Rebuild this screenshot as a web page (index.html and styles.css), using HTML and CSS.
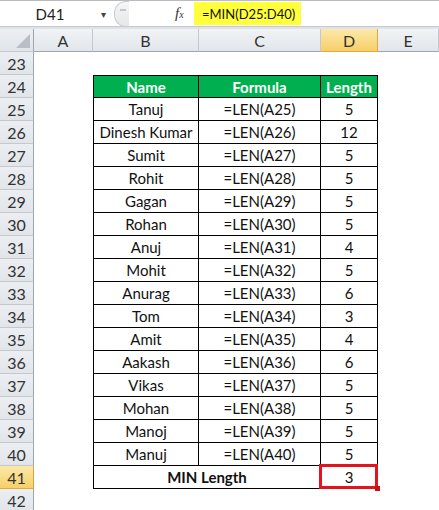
FILE: index.html
```html
<!DOCTYPE html>
<html lang="en">
<head>
<meta charset="UTF-8">
<title>MIN Length</title>
<link rel="stylesheet" href="styles.css">
</head>
<body>
<div class="sheet">
    <div class="formula-bar">
        <div class="name-box">D41</div>
        <div class="name-arrow">&#9662;</div>
        <div class="bar-knob"><span></span></div>
        <div class="fx">f<small>x</small></div>
        <div class="formula"><span>=MIN(D25:D40)</span></div>
    </div>
    <div class="gap"></div>
    <div class="row col-heads">
        <div class="corner"><svg width="14" height="14" viewBox="0 0 14 14"><polygon points="14,0 14,14 0,14" fill="#b9bec6"/></svg></div>
        <div class="ch c-a">A</div>
        <div class="ch c-b">B</div>
        <div class="ch c-c">C</div>
        <div class="ch c-d active">D</div>
        <div class="ch c-e">E</div>
    </div>
    <div id="rows"></div>
</div>
<script src="app.js"></script>
</body>
</html>
```

FILE: styles.css
```css
body {
    margin: 0;
    background: #ffffff;
    font-family: Lato, 'Open Sans', Arial, sans-serif;
}
.sheet {
    width: 439px;
    height: 510px;
    overflow: hidden;
}
.formula-bar {
    height: 27px;
    box-sizing: border-box;
    border-top: 1px solid #b8bcc2;
    border-bottom: 1px solid #c6cad0;
    display: flex;
    align-items: center;
    background: #ffffff;
}
.name-box {
    width: 92px;
    text-align: center;
    font-size: 15px;
    color: #222;
    padding-left: 4px;
}
.name-arrow {
    width: 14px;
    font-size: 10px;
    color: #444;
    text-align: center;
}
.bar-knob {
    width: 14px;
    height: 24px;
    margin-left: 4px;
    border: 1px solid #c9ccd1;
    border-right: none;
    border-radius: 12px 0 0 12px;
    background: linear-gradient(#f6f7f8, #e4e6e9);
    position: relative;
}
.bar-knob span {
    position: absolute;
    left: 5px;
    top: 7px;
    width: 6px;
    height: 2px;
    background: #c3c6cb;
}
.fx {
    margin-left: 46px;
    width: 17px;
    font-family: 'Liberation Serif', serif;
    font-style: italic;
    font-size: 15px;
    color: #333;
}
.fx small {
    font-size: 10px;
}
.formula {
    margin-left: 2px;
    width: 107px;
    box-sizing: border-box;
    height: 23px;
    display: flex;
    align-items: center;
    background: #ffff3c;
    padding-left: 8px;
    font-size: 13px;
    color: #111;
}
.gap {
    height: 2px;
    background: #dfe3e8;
}
.row {
    display: flex;
    height: 23px;
}
.row > div {
    box-sizing: border-box;
    flex: none;
    display: flex;
    align-items: center;
    justify-content: center;
    font-size: 15px;
    color: #111;
}
.corner, .rh {
    width: 34px;
    background: linear-gradient(#eceef2, #e1e5ea);
    border-right: 1px solid #9fa6b0;
    border-bottom: 1px solid #c4c9d0;
    color: #3b3b3b;
}
.corner {
    justify-content: flex-end !important;
    align-items: flex-end !important;
    padding: 0 3px 3px 0;
}
.rh {
    font-size: 16px !important;
    color: #333 !important;
}
.ch {
    background: linear-gradient(#f1f3f5, #e2e6ea);
    border-right: 1px solid #c4c9d0;
    border-bottom: 1px solid #9fa6b0;
    color: #333 !important;
    font-size: 16px !important;
}
.c-a { width: 59px; }
.c-b { width: 106px; }
.c-c { width: 122px; }
.c-d { width: 57px; }
.c-e { width: 61px; }
.ch.active, .rh.active {
    background: linear-gradient(#fce9a8, #f6cf6a);
    border-bottom-color: #e2a93c;
}
.ch.active {
    border-right-color: #e2a93c;
}
.rh.active {
    border-right-color: #d5a24a;
}
.cell {
    border-right: 1px solid #000;
    border-bottom: 1px solid #000;
}
.first {
    border-left: 1px solid #000;
}
.top {
    border-top: 1px solid #000;
}
.head {
    background: #00b050;
    color: #ffffff !important;
    font-weight: bold;
}
.total {
    font-weight: bold;
}
.selected {
    position: relative;
}
.selected::after {
    content: "";
    position: absolute;
    left: -2px;
    top: -2px;
    right: -1px;
    bottom: -1px;
    border: 3px solid #e4141c;
}
.selected::before {
    content: "";
    position: absolute;
    right: -3px;
    bottom: -3px;
    width: 5px;
    height: 5px;
    background: #c80f16;
    z-index: 2;
}
```

FILE: app.js
```js
var names = ['Tanuj', 'Dinesh Kumar', 'Sumit', 'Rohit', 'Gagan', 'Rohan', 'Anuj', 'Mohit',
    'Anurag', 'Tom', 'Amit', 'Aakash', 'Vikas', 'Mohan', 'Manoj', 'Manuj'];

var rowsEl = document.getElementById('rows');
var html = '';

function rowHead(n, active) {
    return '<div class="rh' + (active ? ' active' : '') + '">' + n + '</div>';
}

html += '<div class="row">' + rowHead(23) + '<div class="c-a"></div><div class="c-b"></div><div class="c-c"></div><div class="c-d"></div><div class="c-e"></div></div>';

html += '<div class="row">' + rowHead(24) + '<div class="c-a"></div>' +
    '<div class="c-b cell first top head">Name</div>' +
    '<div class="c-c cell top head">Formula</div>' +
    '<div class="c-d cell top head">Length</div>' +
    '<div class="c-e"></div></div>';

for (var i = 0; i < names.length; i++) {
    var r = 25 + i;
    html += '<div class="row">' + rowHead(r) + '<div class="c-a"></div>' +
        '<div class="c-b cell first">' + names[i] + '</div>' +
        '<div class="c-c cell">=LEN(A' + r + ')</div>' +
        '<div class="c-d cell">' + names[i].length + '</div>' +
        '<div class="c-e"></div></div>';
}

html += '<div class="row">' + rowHead(41, true) + '<div class="c-a"></div>' +
    '<div class="cell first total" style="width:228px">MIN Length</div>' +
    '<div class="c-d cell selected">3</div>' +
    '<div class="c-e"></div></div>';

html += '<div class="row">' + rowHead(42) + '<div class="c-a"></div><div class="c-b"></div><div class="c-c"></div><div class="c-d"></div><div class="c-e"></div></div>';

rowsEl.innerHTML = html;
```
